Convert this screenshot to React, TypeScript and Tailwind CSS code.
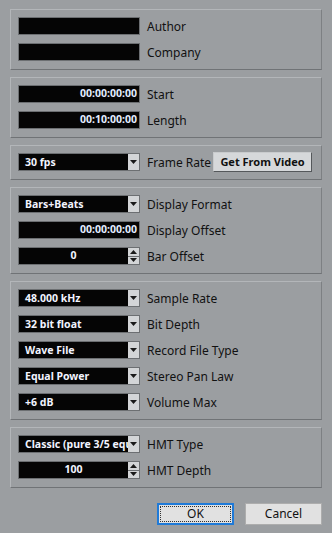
import { ReactNode } from "react";

const font = { fontFamily: '"Noto Sans", "Open Sans", sans-serif' };

function Panel({ children }: { children: ReactNode }) {
  return (
    <div className="flex flex-col gap-[8px] border border-t-[#b3b6b9] border-l-[#b3b6b9] border-b-[#707376] border-r-[#7d8083] pl-[7px] pr-[8px] pt-[7px] pb-[8px]">
      {children}
    </div>
  );
}

function Label({ children }: { children: ReactNode }) {
  return (
    <span className="ml-[7px] translate-y-[1px] text-[12px] leading-[18px] text-[#111] whitespace-nowrap">{children}</span>
  );
}

function TextField({ value = "", align = "right" }: { value?: string; align?: "right" | "center" }) {
  return (
    <div
      className={`flex h-[18px] w-[122px] items-center overflow-hidden border border-[#6c6f72] bg-[#050505] px-[2px] text-[10.5px] font-bold text-[#e4edff] ${
        align === "right" ? "justify-end" : "justify-center"
      }`}
    >
      {value}
    </div>
  );
}

function Dropdown({ value }: { value: string }) {
  return (
    <div className="flex h-[18px] w-[122px] items-stretch border border-[#6c6f72] bg-[#050505]">
      <div className="flex-1 overflow-hidden whitespace-nowrap pl-[6px] text-[10.5px] font-bold leading-[16px] text-[#f2f4ff]">
        {value}
      </div>
      <div className="flex w-[11px] items-center justify-center bg-[#d3d5d7]">
        <svg width="7" height="4" viewBox="0 0 7 4">
          <path d="M0 0h7L3.5 4z" fill="#1a1a1a" />
        </svg>
      </div>
    </div>
  );
}

function Spinner({ value }: { value: string }) {
  return (
    <div className="flex h-[18px] w-[122px] items-stretch border border-[#6c6f72] bg-[#050505]">
      <div className="flex flex-1 items-center justify-center text-[10.5px] font-bold text-[#f2f4ff]">{value}</div>
      <div className="flex w-[11px] flex-col gap-[1px] bg-[#6c6f72]">
        <div className="flex flex-1 items-center justify-center bg-[#d3d5d7]">
          <svg width="7" height="4" viewBox="0 0 7 4">
            <path d="M0 4h7L3.5 0z" fill="#1a1a1a" />
          </svg>
        </div>
        <div className="flex flex-1 items-center justify-center bg-[#d3d5d7]">
          <svg width="7" height="4" viewBox="0 0 7 4">
            <path d="M0 0h7L3.5 4z" fill="#1a1a1a" />
          </svg>
        </div>
      </div>
    </div>
  );
}

function Row({ children }: { children: ReactNode }) {
  return <div className="flex h-[18px] items-center">{children}</div>;
}

export default function App() {
  return (
    <div style={font} className="flex h-[533px] w-[332px] flex-col gap-[7px] bg-[#9b9ea1] px-[10px] pt-[9px]">
      <Panel>
        <Row>
          <TextField />
          <Label>Author</Label>
        </Row>
        <Row>
          <TextField />
          <Label>Company</Label>
        </Row>
      </Panel>

      <Panel>
        <Row>
          <TextField value="00:00:00:00" />
          <Label>Start</Label>
        </Row>
        <Row>
          <TextField value="00:10:00:00" />
          <Label>Length</Label>
        </Row>
      </Panel>

      <Panel>
        <Row>
          <Dropdown value="30 fps" />
          <Label>Frame Rate</Label>
          <button
            type="button"
            className="ml-auto mr-[1px] h-[20px] w-[99px] border border-[#c9cbcd] border-b-[#55585b] border-r-[#55585b] bg-[#d6d8da] text-[11px] font-bold text-[#111]"
          >
            Get From Video
          </button>
        </Row>
      </Panel>

      <Panel>
        <Row>
          <Dropdown value="Bars+Beats" />
          <Label>Display Format</Label>
        </Row>
        <Row>
          <TextField value="00:00:00:00" />
          <Label>Display Offset</Label>
        </Row>
        <Row>
          <Spinner value="0" />
          <Label>Bar Offset</Label>
        </Row>
      </Panel>

      <Panel>
        <Row>
          <Dropdown value="48.000 kHz" />
          <Label>Sample Rate</Label>
        </Row>
        <Row>
          <Dropdown value="32 bit float" />
          <Label>Bit Depth</Label>
        </Row>
        <Row>
          <Dropdown value="Wave File" />
          <Label>Record File Type</Label>
        </Row>
        <Row>
          <Dropdown value="Equal Power" />
          <Label>Stereo Pan Law</Label>
        </Row>
        <Row>
          <Dropdown value="+6 dB" />
          <Label>Volume Max</Label>
        </Row>
      </Panel>

      <Panel>
        <Row>
          <Dropdown value="Classic (pure 3/5 equal)" />
          <Label>HMT Type</Label>
        </Row>
        <Row>
          <Spinner value="100" />
          <Label>HMT Depth</Label>
        </Row>
      </Panel>

      <div className="mt-[8px] flex justify-end gap-[11px]">
        <button
          type="button"
          className="h-[22px] w-[77px] border-2 border-[#1f7ad8] bg-[#e1e1e1] text-[12px] text-[#111] outline outline-1 outline-dotted outline-offset-[-4px] outline-[#333]"
        >
          OK
        </button>
        <button type="button" className="h-[22px] w-[77px] border border-[#adadad] bg-[#e1e1e1] text-[12px] text-[#111]">
          Cancel
        </button>
      </div>
    </div>
  );
}
